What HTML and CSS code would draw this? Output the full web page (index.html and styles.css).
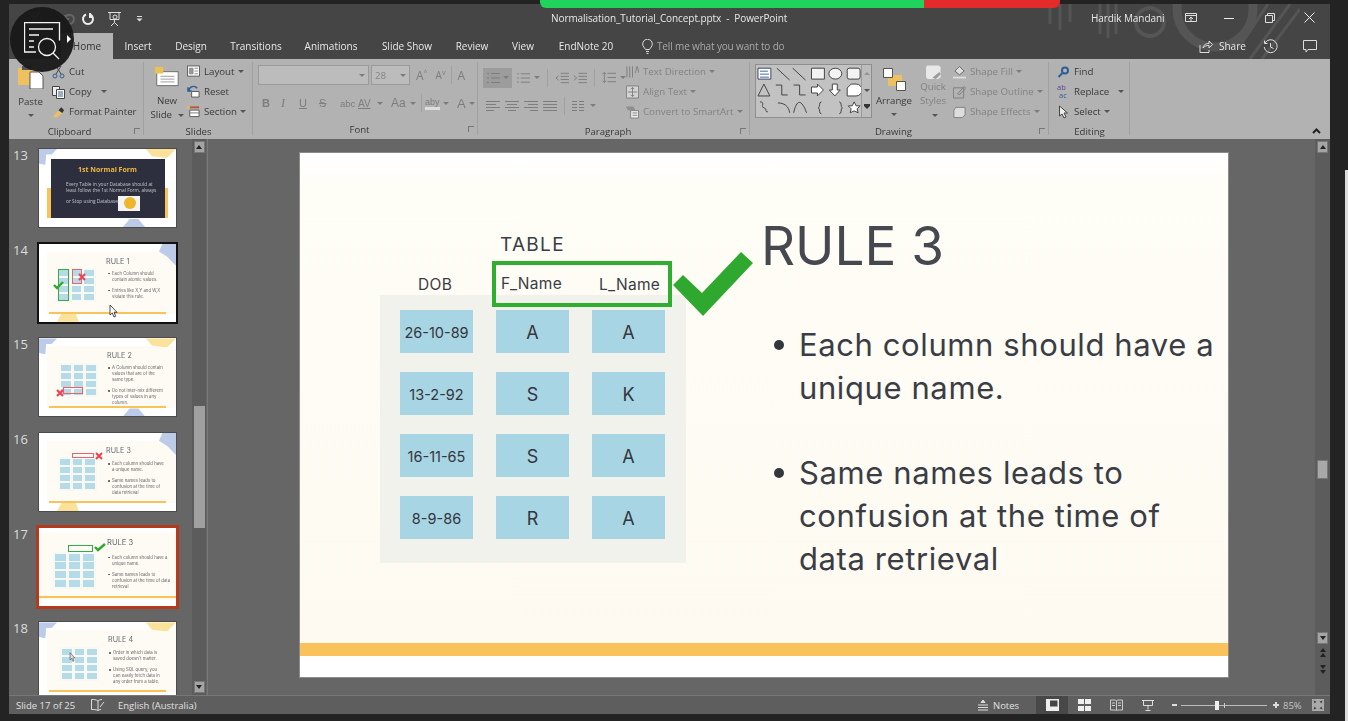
FILE: index.html
```html
<!DOCTYPE html>
<html lang="en">
<head>
    <meta charset="UTF-8">
    <meta name="viewport" content="width=device-width, initial-scale=1.0">
    <title>Normalisation_Tutorial_Concept.pptx - PowerPoint</title>
    <link rel="stylesheet" href="styles.css">
</head>
<body>
    <div class="screen">
        <div class="app">
            <!-- title bar -->
            <header class="titlebar">
                <svg class="title-art" width="300" height="55" viewBox="0 0 300 55" fill="none" stroke="#555">
                    <circle cx="150" cy="18" r="14" stroke-width="4"/>
                    <circle cx="215" cy="5" r="38" stroke-width="9"/>
                    <path d="M100 0v30M108 0v34M116 0v30M50 0v20M60 0v26M70 0v18M250 55l40-55M262 55l38-50M238 45l30-45" stroke-width="3"/>
                </svg>
                <div class="title-row">
                    <div class="qat">
                        <svg class="qat-save" width="16" height="16" viewBox="0 0 16 16" fill="none" stroke="#777"><path d="M2 2h10l2 2v10H2zM5 2v4h6V2M5 14V9h6v5"/></svg>
                        <svg class="qat-undo" width="14" height="14" viewBox="0 0 14 14" fill="none" stroke="#666" stroke-width="2"><path d="M3 7a4.500 4.500 0 1 1 2 4M3 3v4h4"/></svg>
                        <svg class="qat-redo" width="14" height="14" viewBox="0 0 14 14" fill="none" stroke="#eee" stroke-width="2"><path d="M9 2.500a5 5 0 1 1-4 0M9 1v4h3"/></svg>
                        <svg class="qat-show" width="15" height="16" viewBox="0 0 15 16" fill="none" stroke="#ddd"><path d="M1 1.500h13M3 1.500v7h9v-7M7.500 8.500v3M4 15l3.500-3.500L11 15"/><circle cx="8" cy="6" r="2"/></svg>
                        <svg class="qat-more" width="7" height="7" viewBox="0 0 7 7" fill="#ddd"><path d="M1 1h5v1H1zM0.500 3.500h6L3.500 6.500z"/></svg>
                    </div>
                    <div class="doc-title">Normalisation_Tutorial_Concept.pptx &nbsp;-&nbsp; PowerPoint</div>
                    <div class="user">Hardik Mandani</div>
                    <div class="win-buttons">
                        <svg width="12" height="10" viewBox="0 0 12 10" fill="none" stroke="#ddd"><path d="M.5.500h11v8H.500zM.5 2.500h11"/><path d="M6 8V4M4 6l2-2 2 2" /></svg>
                        <svg width="10" height="10" viewBox="0 0 10 10" stroke="#eee"><path d="M0 5.500h10"/></svg>
                        <svg width="10" height="10" viewBox="0 0 10 10" fill="none" stroke="#ddd"><path d="M.5 2.500h7v7h-7zM2.500 2.500v-2h7v7h-2"/></svg>
                        <svg width="11" height="11" viewBox="0 0 11 11" stroke="#eee"><path d="M.5.500l10 10M10.500.500l-10 10"/></svg>
                    </div>
                </div>
                <nav class="tab-row">
                    <span class="tab tab-file">File</span>
                    <span class="tab tab-home">Home</span>
                    <span class="tab tab-insert">Insert</span>
                    <span class="tab tab-design">Design</span>
                    <span class="tab tab-trans">Transitions</span>
                    <span class="tab tab-anim">Animations</span>
                    <span class="tab tab-show">Slide Show</span>
                    <span class="tab tab-review">Review</span>
                    <span class="tab tab-view">View</span>
                    <span class="tab tab-endnote">EndNote 20</span>
                    <span class="tell">
                        <svg width="11" height="15" viewBox="0 0 11 15" fill="none" stroke="#ddd"><path d="M3.500 10.500C2.500 8.500.7 7.500.7 5a4.800 4.800 0 0 1 9.600 0c0 2.500-1.800 3.500-2.800 5.500zM4 12.500h3M4.500 14.500h2"/></svg>
                        Tell me what you want to do
                    </span>
                    <span class="share">
                        <svg width="14" height="13" viewBox="0 0 14 13" fill="none" stroke="#ddd"><path d="M1 5v7.500h9V10M4 8c0-3 3-4.500 6-4.500V1l3.500 3.500L10 8V5.500C7.500 5.500 5.500 6 4 8z"/></svg>
                        Share
                    </span>
                    <svg class="tab-history" width="15" height="15" viewBox="0 0 15 15" fill="none" stroke="#ddd"><path d="M2 4a6.500 6.500 0 1 1-.8 4M1.500 1.500V4.500h3M7.500 4v4l3 1.500"/></svg>
                    <svg class="tab-comment" width="14" height="13" viewBox="0 0 14 13" fill="none" stroke="#ddd"><path d="M.5.500h13v9H5l-2 2.500V9.500H.5z"/></svg>
                </nav>
            </header>

            <!-- ribbon -->
            <section class="ribbon">
                <div class="group g-clip">
                    <div class="group-body">
                        <div class="big-btn paste-btn">
                            <svg width="26" height="25" viewBox="0 0 26 25"><path d="M0 4h18v17H0z" fill="#eec05f"/><path d="M4 2h9v4H4z" fill="#555"/><path d="M12 8h9l4 4v13H12z" fill="#fff" stroke="#555"/></svg>
                            <span class="big-label">Paste</span>
                            <i class="caret"></i>
                        </div>
                        <div class="rows">
                            <div class="row"><svg class="ico" width="13" height="14" viewBox="0 0 13 14" fill="none" stroke="#3a5d8a"><circle cx="3" cy="11" r="2"/><circle cx="10" cy="11" r="2"/><path d="M4 9l5-8M9 9L4 1" stroke="#444"/></svg>Cut</div>
                            <div class="row"><svg class="ico" width="13" height="14" viewBox="0 0 13 14" fill="#eee" stroke="#444"><path d="M.5 1.500h7v9h-7z"/><path d="M4.500 4.500h8v9h-8z" fill="#fff"/><path d="M6 7h5M6 9h5M6 11h5" stroke="#3a5d8a"/></svg>Copy <i class="caret caret-copy"></i></div>
                            <div class="row"><svg class="ico" width="14" height="14" viewBox="0 0 14 14"><path d="M1 12l6-7 4 3-6 5z" fill="#eec05f"/><path d="M7 5l3-3 3 3-2 3z" fill="#333"/></svg>Format Painter</div>
                        </div>
                    </div>
                    <div class="group-label">Clipboard<i class="launcher"></i></div>
                </div>

                <div class="group g-slides">
                    <div class="group-body">
                        <div class="big-btn new-btn">
                            <svg width="26" height="22" viewBox="0 0 26 22"><path d="M2 5h23v15H2z" fill="#fff" stroke="#666"/><path d="M6 10h15M6 13h15M6 16h15" stroke="#999"/><path d="M0 0h9v7H0z" fill="#e8c255"/></svg>
                            <span class="big-label">New<br>Slide <i class="caret caret-in"></i></span>
                        </div>
                        <div class="rows">
                            <div class="row"><svg class="ico" width="14" height="13" viewBox="0 0 14 13" fill="#fff" stroke="#555"><path d="M.5.500h13v11H.500z"/><path d="M2.500 3h4v6h-4zM8 3h4M8 6h4M8 9h4" fill="#999" stroke="#888"/></svg>Layout <i class="caret caret-in"></i></div>
                            <div class="row"><svg class="ico" width="14" height="13" viewBox="0 0 14 13" fill="none" stroke="#2d5f95" stroke-width="1.500"><path d="M2 6a5 5 0 0 1 9-3M1 2v4h4"/><path d="M5 6.500h8v6H5z" fill="#fff" stroke="#555" stroke-width="1"/></svg>Reset</div>
                            <div class="row"><svg class="ico" width="14" height="13" viewBox="0 0 14 13" fill="#fff" stroke="#555"><path d="M3 5h10v7H3z"/><path d="M0 1h4v2H0z" fill="#e8c255" stroke="none"/><path d="M3 2h10" stroke="#c0562f" stroke-width="2"/><path d="M3 8h10" stroke="#777"/></svg>Section <i class="caret caret-in"></i></div>
                        </div>
                    </div>
                    <div class="group-label">Slides</div>
                </div>

                <div class="group g-font">
                    <div class="group-body font-body">
                        <div class="tool-row">
                            <div class="font-box"><i class="caret"></i></div>
                            <div class="size-box"><span>28</span><i class="caret"></i></div>
                            <span class="tool grow-a">A<sup>^</sup></span>
                            <span class="tool shrink-a">A<sup>v</sup></span>
                            <i class="vsep sep-font-1"></i>
                            <span class="tool erase-a">A</span>
                        </div>
                        <div class="tool-row fmt-row">
                            <b>B</b><em>I</em><u>U</u><s>S</s><span class="abc">abc</span><span class="av">AV</span><i class="caret"></i><span class="aa">Aa</span><i class="caret"></i><i class="vsep"></i><span class="aby">aby</span><i class="caret"></i><span class="font-a">A</span><i class="caret"></i>
                        </div>
                    </div>
                    <div class="group-label">Font<i class="launcher"></i></div>
                </div>

                <div class="group g-para">
                    <div class="group-body para-body">
                        <div class="para-tools">
                            <div class="tool-row">
                                <span class="list-on"><svg width="16" height="12" viewBox="0 0 16 12" stroke="#7d7d7d"><path d="M0 1.500h2M4 1.500h9M0 6h2M4 6h9M0 10.500h2M4 10.500h9"/></svg><i class="caret"></i></span>
                                <svg class="num-list" width="14" height="12" viewBox="0 0 14 12" stroke="#7d7d7d"><path d="M0 1.500h2M4 1.500h10M0 6h2M4 6h10M0 10.500h2M4 10.500h10"/></svg><i class="caret"></i>
                                <i class="vsep"></i>
                                <svg width="15" height="12" viewBox="0 0 15 12" fill="none" stroke="#7d7d7d"><path d="M6 1h9M6 4.300h9M6 7.600h9M6 11h9M4 3.500L1 6l3 2.500"/></svg>
                                <svg width="15" height="12" viewBox="0 0 15 12" fill="none" stroke="#7d7d7d"><path d="M6 1h9M6 4.300h9M6 7.600h9M6 11h9M1 3.500L4 6 1 8.500"/></svg>
                                <i class="vsep"></i>
                                <svg width="15" height="13" viewBox="0 0 15 13" fill="none" stroke="#7d7d7d"><path d="M6 2h9M6 6.500h9M6 11h9M2.500 1v11M.5 3l2-2 2 2M.5 10l2 2 2-2"/></svg><i class="caret"></i>
                            </div>
                            <div class="tool-row align-row">
                                <svg width="14" height="10" viewBox="0 0 14 10" stroke="#7d7d7d"><path d="M0 .500h14M0 3.500h10M0 6.500h14M0 9.500h8"/></svg>
                                <svg width="14" height="10" viewBox="0 0 14 10" stroke="#7d7d7d"><path d="M0 .500h14M2 3.500h10M0 6.500h14M3 9.500h8"/></svg>
                                <svg width="14" height="10" viewBox="0 0 14 10" stroke="#7d7d7d"><path d="M0 .500h14M4 3.500h10M0 6.500h14M6 9.500h8"/></svg>
                                <svg width="14" height="10" viewBox="0 0 14 10" stroke="#7d7d7d"><path d="M0 .500h14M0 3.500h14M0 6.500h14M0 9.500h14"/></svg>
                                <i class="vsep"></i>
                                <svg width="13" height="10" viewBox="0 0 13 10" stroke="#7d7d7d"><path d="M0 .500h5M7 .500h5M0 3.500h5M7 3.500h5M0 6.500h5M7 6.500h5M0 9.500h5M7 9.500h5"/></svg><i class="caret"></i>
                            </div>
                        </div>
                        <div class="rows rows-off">
                            <div class="row"><svg class="ico" width="14" height="14" viewBox="0 0 14 14" fill="none" stroke="#7d7d7d"><path d="M1 1v12M4 1v12M7 1v12M10 8l2-7 2 7"/></svg>Text Direction <i class="caret caret-in"></i></div>
                            <div class="row"><svg class="ico" width="14" height="14" viewBox="0 0 14 14" fill="#d5d5d5" stroke="#7d7d7d"><path d="M.5.500h13v13H.500z"/><path d="M7 2v10M5 4l2-2 2 2M5 10l2 2 2-2M2 7h10" fill="none"/></svg>Align Text <i class="caret caret-in"></i></div>
                            <div class="row"><svg class="ico" width="14" height="14" viewBox="0 0 14 14" fill="#eee" stroke="#7d7d7d"><path d="M0 1h8l2 4H2z" fill="#8e8e8e" stroke="none"/><path d="M5 5.500h8.500v8H5z"/><path d="M7 8h5M7 10.500h5"/></svg>Convert to SmartArt <i class="caret caret-in"></i></div>
                        </div>
                    </div>
                    <div class="group-label">Paragraph<i class="launcher"></i></div>
                </div>

                <div class="group g-draw">
                    <div class="group-body draw-body">
                        <div class="gallery">
                            <svg width="106" height="52" viewBox="0 0 106 52" fill="none" stroke="#444">
                                <path d="M2 3h13v11H2z" fill="#fff" stroke="#446"/><path d="M4 6h8M4 9h9M4 12h9" stroke="#3a6ea8"/>
                                <path d="M21 3l13 12M37 3l13 12"/><path d="M56 3h13v11H56zM92 5a2 2 0 0 1 2-2h9a2 2 0 0 1 2 2v7a2 2 0 0 1-2 2h-9a2 2 0 0 1-2-2z" fill="#f3f3f3"/><ellipse cx="80" cy="8.500" rx="6.500" ry="5.500" fill="#f3f3f3"/>
                                <path d="M8 19l6 12H2zM20 20h6v10h6M38 20h6v10h6" fill="none"/><path d="M56 22h6v-3l6 6-6 6v-3h-6z" fill="#fff"/><path d="M77 19h5v6h3l-5.500 6L74 25h3z" fill="#fff"/><path d="M92 31v-8l4-4h5a4 4 0 0 1 0 12z" fill="#fff"/>
                                <path d="M4 37c6 0 0 5 4 6s0 4 4 4M22 38c6 0 11 3 12 10M38 48c3-14 8-14 13 0M66 37c-3 0-1 5-3 6 2 1 0 6 3 6M84 37c3 0 1 5 3 6-2 1 0 6-3 6"/><path d="M99 37l2 4h4l-3 3 1 4-4-2-4 2 1-4-3-3h4z" fill="#fff"/>
                            </svg>
                            <div class="gallery-scroll"><i class="caret gs-up"></i><i class="caret"></i><i class="caret gs-more"></i></div>
                        </div>
                        <div class="big-btn arrange-btn">
                            <svg width="23" height="23" viewBox="0 0 23 23"><path d="M5 7h14v11H5z" fill="#eec05f"/><path d="M.5.500h9v9h-9zM13.500 13.500h9v9h-9z" fill="#fff" stroke="#555"/></svg>
                            <span class="big-label">Arrange</span>
                            <i class="caret"></i>
                        </div>
                        <div class="big-btn quick-btn">
                            <svg width="26" height="25" viewBox="0 0 26 25"><path d="M3 1h20l3 3v17l-6 4H4l-3-4V4z" fill="#e8e8e8"/><path d="M12 22l12-10 2 4-8 8z" fill="#999"/></svg>
                            <span class="big-label">Quick<br>Styles <i class="caret caret-in"></i></span>
                        </div>
                        <div class="rows rows-off">
                            <div class="row"><svg class="ico" width="14" height="14" viewBox="0 0 14 14"><path d="M7 1l5 5-5 4-5-4z" fill="#ddd" stroke="#666"/><path d="M0 12h14v2H0z" fill="#ddd"/></svg>Shape Fill <i class="caret caret-in"></i></div>
                            <div class="row"><svg class="ico" width="14" height="14" viewBox="0 0 14 14" fill="none" stroke="#7d7d7d"><path d="M.5 2.500h11v11H.500zM5 9l7-8 2 2-7 7z"/></svg>Shape Outline <i class="caret caret-in"></i></div>
                            <div class="row"><svg class="ico" width="14" height="14" viewBox="0 0 14 14"><path d="M3 2h10v8l-3 3H1V5z" fill="#ddd" stroke="#7d7d7d"/></svg>Shape Effects <i class="caret caret-in"></i></div>
                        </div>
                    </div>
                    <div class="group-label">Drawing<i class="launcher"></i></div>
                </div>

                <div class="group g-edit">
                    <div class="group-body">
                        <div class="rows">
                            <div class="row"><svg class="ico" width="12" height="12" viewBox="0 0 12 12" fill="none" stroke="#2d5f95" stroke-width="2"><circle cx="7.500" cy="4.500" r="3"/><path d="M5 7l-4 4"/></svg>Find</div>
                            <div class="row"><span class="ab ico"><span class="ab-top">ab</span><span class="ab-low">ac</span></span>Replace <i class="caret caret-replace"></i></div>
                            <div class="row"><svg class="ico" width="10" height="14" viewBox="0 0 10 14" fill="#eee" stroke="#444"><path d="M1 1v10l2.500-2L5.500 13l2-1-2-4H9z"/></svg>Select <i class="caret caret-in"></i></div>
                        </div>
                    </div>
                    <div class="group-label">Editing</div>
                </div>
                <svg class="collapse" width="9" height="6" viewBox="0 0 9 6" fill="none" stroke="#222" stroke-width="2"><path d="M1 5l3.500-3.500L8 5"/></svg>
            </section>

            <!-- slides and stage -->
            <main class="workspace">
                <aside class="sidebar">
                    <div class="thumb-row">
                        <span class="thumb-num">13</span>
                        <div class="thumb">
                            <i class="blob blue tl"></i><i class="blob yellow tr"></i><i class="blob blue bc"></i>
                            <i class="dark-band"></i>
                            <div class="dark-card">
                                <h4>1st Normal Form</h4>
                                <p>Every Table in your Database should at<br>least follow the 1st Normal Form, always</p>
                                <p class="dark-last">or Stop using Database</p>
                                <span class="dark-pic"><i></i></span>
                            </div>
                        </div>
                    </div>
                    <div class="thumb-row">
                        <span class="thumb-num">14</span>
                        <div class="thumb thumb-black">
                            <i class="cream"></i><i class="blob blue tr-small"></i><i class="blob yellow bl"></i>
                            <div class="mini-grid g14"><i></i><i></i><i></i><i></i><i></i><i></i><i></i><i></i><i></i><i></i><i></i><i></i></div>
                            <i class="mark green-box b14a"></i><i class="mark red-box b14b"></i>
                            <svg class="mark x14" width="8" height="8" viewBox="0 0 8 8" stroke="#f04050" stroke-width="2"><path d="M1 1l6 6M7 1L1 7"/></svg>
                            <svg class="mark c14" width="11" height="9" viewBox="0 0 11 9" fill="none" stroke="#2fa82f" stroke-width="2.400"><path d="M1 4l3 3 6-6"/></svg>
                            <h5 class="mini-rule r14">RULE 1</h5>
                            <ul class="mini-list l14"><li>Each Column should contain atomic values.</li><li>Entries like X,Y and W,X violate this rule.</li></ul>
                            <i class="mini-line"></i>
                            <svg class="cursor c-a" width="9" height="14" viewBox="0 0 9 14" fill="#fff" stroke="#222" stroke-width=".8"><path d="M1 1v10l2.300-2 1.700 4 1.700-.7-1.700-4H8z"/></svg>
                        </div>
                    </div>
                    <div class="thumb-row">
                        <span class="thumb-num">15</span>
                        <div class="thumb">
                            <i class="cream"></i><i class="blob blue tl"></i><i class="blob yellow tr"></i><i class="blob blue bc"></i>
                            <div class="mini-grid g15"><i></i><i></i><i></i><i></i><i></i><i></i><i></i><i></i><i></i><i></i><i></i><i></i></div>
                            <i class="mark red-box b15"></i>
                            <svg class="mark x15" width="8" height="8" viewBox="0 0 8 8" stroke="#f04050" stroke-width="2"><path d="M1 1l6 6M7 1L1 7"/></svg>
                            <h5 class="mini-rule r15">RULE 2</h5>
                            <ul class="mini-list l15"><li>A Column should contain values that are of the same type.</li><li>Do not inter-mix different types of values in any column.</li></ul>
                            <i class="mini-line"></i>
                        </div>
                    </div>
                    <div class="thumb-row">
                        <span class="thumb-num">16</span>
                        <div class="thumb">
                            <i class="cream"></i><i class="blob blue tr-small"></i><i class="blob yellow bl"></i>
                            <div class="mini-grid g16"><i></i><i></i><i></i><i></i><i></i><i></i><i></i><i></i><i></i><i></i><i></i><i></i></div>
                            <i class="mark red-box b16"></i>
                            <svg class="mark x16" width="8" height="8" viewBox="0 0 8 8" stroke="#f04050" stroke-width="2"><path d="M1 1l6 6M7 1L1 7"/></svg>
                            <h5 class="mini-rule r16">RULE 3</h5>
                            <ul class="mini-list l16"><li>Each column should have a unique name.</li><li>Same names leads to confusion at the time of data retrieval</li></ul>
                            <i class="mini-line"></i>
                        </div>
                    </div>
                    <div class="thumb-row">
                        <span class="thumb-num">17</span>
                        <div class="thumb thumb-active">
                            <i class="cream"></i>
                            <div class="mini-grid g17"><i></i><i></i><i></i><i></i><i></i><i></i><i></i><i></i><i></i><i></i><i></i><i></i></div>
                            <i class="mark green-box b17"></i>
                            <svg class="mark c17" width="12" height="9" viewBox="0 0 12 9" fill="none" stroke="#2fa82f" stroke-width="2.400"><path d="M1 4l3 3 7-6"/></svg>
                            <h5 class="mini-rule r17">RULE 3</h5>
                            <ul class="mini-list l17"><li>Each column should have a unique name.</li><li>Same names leads to confusion at the time of data retrieval</li></ul>
                            <i class="mini-line line-17"></i>
                        </div>
                    </div>
                    <div class="thumb-row">
                        <span class="thumb-num">18</span>
                        <div class="thumb">
                            <i class="cream"></i><i class="blob blue tl"></i><i class="blob yellow tr"></i>
                            <div class="mini-grid g18"><i></i><i></i><i></i><i></i><i></i><i></i><i></i><i></i><i></i><i></i><i></i><i></i></div>
                            <svg class="cursor c-b" width="7" height="10" viewBox="0 0 9 14" fill="#ddd" stroke="#444" stroke-width=".8"><path d="M1 1v10l2.300-2 1.700 4 1.700-.7-1.700-4H8z"/></svg>
                            <h5 class="mini-rule r18">RULE 4</h5>
                            <ul class="mini-list l18"><li>Order in which data is saved doesn't matter.</li><li>Using SQL query, you can easily fetch data in any order from a table.</li></ul>
                            <i class="mini-line"></i>
                        </div>
                    </div>
                </aside>
                <div class="scrollbar side-scroll">
                    <span class="sb-btn"><i class="tri-up"></i></span>
                    <span class="sb-thumb side-thumb"></span>
                    <span class="sb-btn"><i class="tri-down"></i></span>
                </div>

                <div class="stage">
                    <article class="slide">
                        <i class="slide-cream"></i>
                        <i class="slide-band"></i>
                        <div class="tbl-panel"></div>
                        <div class="tbl-title">TABLE</div>
                        <div class="tbl-head head-dob">DOB</div>
                        <div class="tbl-head head-f">F_Name</div>
                        <div class="tbl-head head-l">L_Name</div>
                        <div class="head-box"></div>
                        <svg class="big-check" width="80" height="64" viewBox="0 0 80 64"><path d="M0 33l10-10 19 18L68 0l12 11-50 53z" fill="#2fa82f"/></svg>
                        <div class="tbl-grid">
                            <div class="cell">26-10-89</div><div class="cell cell-letter">A</div><div class="cell cell-letter">A</div>
                            <div class="cell">13-2-92</div><div class="cell cell-letter">S</div><div class="cell cell-letter">K</div>
                            <div class="cell">16-11-65</div><div class="cell cell-letter">S</div><div class="cell cell-letter">A</div>
                            <div class="cell">8-9-86</div><div class="cell cell-letter">R</div><div class="cell cell-letter">A</div>
                        </div>
                        <h1 class="rule-title">RULE 3</h1>
                        <ul class="rule-points">
                            <li>Each column should have a unique name.</li>
                            <li>Same names leads to confusion at the time of data retrieval</li>
                        </ul>
                    </article>
                </div>
                <div class="scrollbar main-scroll">
                    <span class="sb-btn"><i class="tri-up"></i></span>
                    <span class="sb-thumb main-thumb"></span>
                    <span class="sb-btn sb-down"><i class="tri-down"></i></span>
                    <span class="page-arrows"><i class="tri-up"></i><i class="tri-up"></i></span>
                    <span class="page-arrows"><i class="tri-down"></i><i class="tri-down"></i></span>
                </div>
            </main>

            <!-- status bar -->
            <footer class="statusbar">
                <span class="st-slide">Slide 17 of 25</span>
                <svg class="st-book" width="14" height="12" viewBox="0 0 14 12" fill="none" stroke="#ddd"><path d="M7 2C5 .5 3 .5 .5.500v10c2.500 0 4.500 0 6.500 1 1-.6 2-1 3-1M7 2v9.500M7 2c1-1 2.500-1.500 4-1.500M9 8l4-5"/></svg>
                <span class="st-lang">English (Australia)</span>
                <span class="st-notes"><svg width="10" height="11" viewBox="0 0 10 11" stroke="#ddd" fill="#ddd"><path d="M5 0l2 2.500H3zM0 5h10M0 7.500h10M0 10h10" /></svg>Notes</span>
                <span class="st-view st-view-on"><svg width="13" height="12" viewBox="0 0 13 12"><path d="M0 0h13v12H0z" fill="#eee"/><path d="M4 1.500h7.500v6H4z" fill="#444"/></svg></span>
                <span class="st-view"><svg width="13" height="12" viewBox="0 0 13 12" fill="#eee"><path d="M0 0h6v5H0zM7 0h6v5H7zM0 7h6v5H0zM7 7h6v5H7z"/></svg></span>
                <span class="st-view"><svg width="13" height="12" viewBox="0 0 13 12" fill="none" stroke="#ccc"><path d="M.5 1h5L6.500 2l1-1h5v10h-5l-1 1-1-1h-5zM6.500 2v9M2 4h3M2 6.500h3M8 4h3M8 6.500h3"/></svg></span>
                <span class="st-view"><svg width="12" height="12" viewBox="0 0 12 12" fill="none" stroke="#ddd"><path d="M0 1.500h12M1.500 1.500v5h9v-5M6 6.500v4M3.500 11.500h5"/></svg></span>
                <span class="zoom-ctl">
                    <i class="zoom-minus"></i>
                    <span class="zoom-track"><i class="zoom-knob"></i><i class="zoom-tick"></i></span>
                    <i class="zoom-plus"></i>
                </span>
                <span class="st-pct">85%</span>
                <svg class="st-fit" width="12" height="12" viewBox="0 0 12 12" fill="#aaa"><path d="M0 0h12v12H0z"/><path d="M1.500 1.500l3 1-2 2zM10.500 1.500l-1 3-2-2zM1.500 10.500l1-3 2 2zM10.500 10.500l-3-1 2-2z" fill="#444"/></svg>
            </footer>
        </div>

        <!-- overlays from the screen recorder and the call -->
        <div class="call-pill"><span class="pill-green"></span><span class="pill-red"></span></div>
        <div class="rec-badge">
            <svg width="38" height="38" viewBox="0 0 38 38" fill="none" stroke="#f4f4f4" stroke-width="1.300">
                <path d="M12 30H.5V.5h35v18"/>
                <path d="M5 7h24M5 13h10M5 19h5M5 25h5"/>
                <circle cx="23" cy="25" r="8.500"/>
                <path d="M29 31l6 6"/>
            </svg>
            <i class="rec-arrow"></i>
        </div>
        <i class="edge-strip"></i>
    </div>
</body>
</html>
```

FILE: styles.css
```css
* {
    box-sizing: border-box;
}
body {
    margin: 0;
    background-color: #232323;
    font-family: "Open Sans", "Liberation Sans", sans-serif;
    overflow: hidden;
}
i {
    font-style: normal;
}
.screen {
    position: relative;
    width: 1348px;
    height: 721px;
    padding: 4px 18px 7px 9px;
    overflow: hidden;
}
.app {
    height: 710px;
    display: flex;
    flex-direction: column;
    filter: blur(0.45px);
}

/* title bar */
.titlebar {
    position: relative;
    height: 55px;
    flex: none;
    background-color: #454545;
    color: #e8e8e8;
}
.title-art {
    position: absolute;
    right: 30px;
    top: 0;
}
.title-row {
    position: relative;
    height: 29px;
    display: flex;
    align-items: center;
    font-size: 10px;
    letter-spacing: -0.08px;
    padding-bottom: 2px;
}
.qat {
    width: 542px;
    display: flex;
    align-items: center;
    padding-left: 18px;
    padding-top: 2px;
    flex: none;
}
.qat-undo {
    margin-left: 19px;
}
.qat-redo {
    margin-left: 5px;
}
.qat-show {
    margin-left: 12px;
}
.qat-more {
    margin-left: 14px;
}
.doc-title {
    width: 280px;
    flex: none;
}
.user {
    margin-left: 260px;
    width: 94px;
}
.win-buttons {
    display: flex;
    align-items: center;
    gap: 29px;
}
.win-buttons svg:nth-child(2) {
    margin-left: -2px;
}
.win-buttons svg:nth-child(3) {
    margin-left: 2px;
}
.tab-row {
    position: relative;
    height: 26px;
    display: flex;
    align-items: center;
    font-size: 10px;
}
.tab {
    text-align: center;
    flex: none;
}
.tab-file {
    width: 52px;
    padding-right: 8px;
    color: #777;
}
.tab-home {
    width: 52px;
    height: 26px;
    line-height: 26px;
    background-color: #b2b2b2;
    color: #333;
}
.tab-insert {
    width: 50px;
}
.tab-design {
    width: 56px;
}
.tab-trans {
    width: 74px;
}
.tab-anim {
    width: 76px;
}
.tab-show {
    width: 76px;
}
.tab-review {
    width: 54px;
}
.tab-view {
    width: 48px;
}
.tab-endnote {
    width: 78px;
}
.tell {
    width: 574px;
    padding-left: 17px;
    color: #a8a8a8;
    display: flex;
    align-items: center;
    gap: 4px;
    flex: none;
    letter-spacing: -0.15px;
}
.tell svg {
    flex: none;
}
.share {
    display: flex;
    align-items: center;
    gap: 6px;
    width: 54px;
    flex: none;
}
.tab-history {
    margin-left: 10px;
}
.tab-comment {
    margin-left: 25px;
}

/* ribbon */
.ribbon {
    position: relative;
    height: 80px;
    flex: none;
    display: flex;
    background-color: #b2b2b2;
    color: #3a3a3a;
    font-size: 9.7px;
}
.group {
    position: relative;
    display: flex;
    flex-direction: column;
    flex: none;
}
.group::after {
    content: "";
    position: absolute;
    right: 0;
    top: 3px;
    bottom: 4px;
    width: 1px;
    background-color: #a0a0a0;
}
.group-body {
    height: 63px;
    display: flex;
    padding-top: 2.500px;
}
.group-label {
    position: relative;
    text-align: center;
    line-height: 19px;
    font-size: 9.6px;
    color: #383838;
    padding-right: 12px;
}
.g-clip .group-label {
    padding-right: 14px;
}
.g-slides .group-label,
.g-edit .group-label {
    padding-right: 0;
}
.launcher {
    position: absolute;
    right: 4px;
    top: 6px;
    width: 6px;
    height: 6px;
    border-left: 1px solid #777;
    border-top: 1px solid #777;
}
.g-clip {
    width: 135px;
}
.g-slides {
    width: 109px;
}
.g-font {
    width: 225px;
}
.g-para {
    width: 272px;
}
.g-draw {
    width: 299px;
}
.g-edit {
    width: 81px;
}
.big-btn {
    display: flex;
    flex-direction: column;
    align-items: center;
    flex: none;
    padding-top: 5px;
    line-height: 14px;
}
.big-label {
    text-align: center;
    margin-top: 3px;
}
.paste-btn {
    width: 43px;
    margin-top: -3px;
}
.paste-btn .big-label {
    margin-top: 6px;
}
.paste-btn .caret {
    margin-top: 5px;
}
.new-btn {
    width: 40px;
    margin-left: 3px;
    padding-top: 5px;
}
.new-btn .big-label {
    margin-top: 7px;
}
.rows {
    display: flex;
    flex-direction: column;
}
.row {
    height: 20px;
    display: flex;
    align-items: center;
    white-space: nowrap;
}
.ico {
    flex: none;
    width: 13px;
    margin-right: 4px;
}
.rows-off {
    color: #838383;
}
.caret {
    display: inline-block;
    width: 0;
    height: 0;
    border-left: 3px solid transparent;
    border-right: 3px solid transparent;
    border-top: 3px solid #555;
    flex: none;
}
.caret-in {
    margin-left: 3px;
    vertical-align: middle;
}
.caret-copy {
    margin-left: 9px;
}
.caret-replace {
    margin-left: 9px;
}
.rows-off .caret,
.font-body .caret,
.para-tools .caret {
    border-top-color: #7d7d7d;
}
.font-body {
    flex-direction: column;
    padding: 6px 0 0 5px;
    gap: 6px;
}
.tool-row {
    height: 20px;
    display: flex;
    align-items: center;
    color: #7d7d7d;
}
.font-body .fmt-row {
    margin-top: 2px;
}
.font-box {
    width: 111px;
    height: 20px;
    background-color: #bcbcbc;
    border: 1px solid #9a9a9a;
    display: flex;
    align-items: center;
    justify-content: flex-end;
    padding-right: 3px;
}
.size-box {
    width: 39px;
    height: 20px;
    margin-left: 2px;
    background-color: #bcbcbc;
    border: 1px solid #9a9a9a;
    display: flex;
    align-items: center;
    justify-content: space-between;
    padding: 0 3px;
    color: #858585;
}
.tool {
    font-size: 12px;
}
.tool sup {
    font-size: 7px;
}
.grow-a {
    margin-left: 6px;
}
.shrink-a {
    margin-left: 8px;
    font-size: 10px;
}
.sep-font-1 {
    margin: 0 5px 0 6px;
}
.vsep {
    width: 1px;
    height: 18px;
    background-color: #a0a0a0;
    flex: none;
}
.fmt-row {
    padding-left: 4px;
    font-size: 11px;
    font-family: "Liberation Sans", sans-serif;
}
.fmt-row b {
    width: 19px;
}
.fmt-row em {
    width: 18px;
    font-family: "Liberation Serif", serif;
    font-size: 12px;
}
.fmt-row u {
    width: 20px;
}
.fmt-row s {
    width: 21px;
}
.abc {
    width: 17px;
    font-size: 9.500px;
    margin-right: 1px;
}
.av {
    width: 14px;
    font-size: 10px;
    margin-right: 2px;
    text-decoration: underline;
}
.aa {
    width: 16px;
    margin-left: 8px;
    font-size: 12px;
}
.fmt-row .caret {
    margin-left: 3px;
}
.fmt-row .vsep {
    margin: 0 3px 0 5px;
}
.aby {
    width: 15px;
    font-size: 9px;
    border-bottom: 3px solid #ddd;
}
.font-a {
    font-size: 13px;
    margin-left: 8px;
}
.para-body {
    padding-left: 5px;
}
.para-tools {
    width: 143px;
    display: flex;
    flex-direction: column;
    padding-top: 6px;
    gap: 8px;
    flex: none;
}
.para-tools .tool-row {
    gap: 4px;
}
.list-on {
    width: 29px;
    height: 20px;
    background-color: #9c9c9c;
    display: flex;
    align-items: center;
    justify-content: space-between;
    padding: 0 3px 0 4px;
}
.num-list {
    margin-left: 1px;
}
.para-tools .vsep {
    margin: 0 3px;
}
.align-row {
    padding-left: 3px;
    gap: 5px !important;
}
.align-row .vsep {
    margin: 0 2px;
}
.draw-body {
    padding-left: 5px;
}
.gallery {
    width: 117px;
    height: 54px;
    margin-top: 2px;
    display: flex;
    justify-content: space-between;
    background-color: #c2c2c2;
    border: 1px solid #8e8e8e;
    flex: none;
}
.gallery-scroll {
    width: 10px;
    display: flex;
    flex-direction: column;
    justify-content: space-around;
    align-items: center;
    background-color: #bcbcbc;
    border-left: 1px solid #999;
}
.gs-up {
    transform: rotate(180deg);
    opacity: 0.4;
}
.gs-more {
    border-top-color: #333;
    box-shadow: 0 -2px 0 #333;
}
.arrange-btn {
    width: 40px;
    margin-left: 2px;
    padding-top: 6px;
    line-height: 14px;
}
.arrange-btn .big-label {
    margin-top: 3px;
}
.arrange-btn .caret {
    margin-top: 5px;
}
.quick-btn {
    width: 32px;
    padding-top: 3px;
    color: #838383;
    margin-left: 3px;
}
.quick-btn .big-label {
    margin-top: 1px;
}
.g-draw .rows {
    margin-left: 4px;
}
.g-edit .rows {
    margin-left: 8px;
}
.ab {
    display: flex;
    flex-direction: column;
    font-size: 7.500px;
    line-height: 7.500px;
    width: 13px;
}
.ab-top {
    color: #5a3f9a;
}
.ab-low {
    color: #2d5f95;
    padding-left: 2px;
}
.collapse {
    position: absolute;
    right: 9px;
    top: 69px;
}

/* workspace */
.workspace {
    height: 556px;
    flex: none;
    display: flex;
    background-color: #666;
}
.sidebar {
    width: 183px;
    flex: none;
    padding-top: 10px;
    display: flex;
    flex-direction: column;
    gap: 16.700px;
    overflow: hidden;
}
.thumb-row {
    display: flex;
    flex: none;
}
.thumb-num {
    width: 30px;
    flex: none;
    padding-left: 4px;
    font-size: 13px;
    line-height: 13px;
    color: #dcdcdc;
}
.thumb {
    position: relative;
    width: 137px;
    height: 78px;
    flex: none;
    background-color: #fff;
    overflow: hidden;
    outline: 1px solid #4c4c4c;
    filter: blur(0.35px);
}
.thumb-black {
    outline: 2px solid #111;
}
.thumb-active {
    outline: 3px solid #b5391d;
}
.thumb i,
.thumb svg,
.thumb h5,
.thumb ul,
.thumb .mini-grid,
.thumb .dark-card {
    position: absolute;
}
.cream {
    left: 8px;
    right: 0;
    top: 8px;
    bottom: 8px;
    background-color: #fefbf5;
}
.thumb-active .cream {
    left: 0;
    top: 4px;
    bottom: 6px;
}
.blob {
    display: block;
}
.blue {
    background-color: #bccbe8;
}
.yellow {
    background-color: #fbe29a;
}
.tl {
    left: 0;
    top: 0;
    width: 18px;
    height: 16px;
    clip-path: polygon(0 0, 100% 0, 70% 35%, 40% 35%, 35% 100%, 0 90%);
}
.tr {
    right: 0;
    top: 0;
    width: 30px;
    height: 9px;
    clip-path: polygon(0 0, 100% 0, 70% 100%, 20% 80%);
}
.tr-small {
    right: 0;
    top: 0;
    width: 17px;
    height: 22px;
    clip-path: polygon(20% 0, 100% 0, 100% 100%, 50% 60%, 0 35%);
}
.bl {
    left: 18px;
    bottom: 0;
    width: 22px;
    height: 8px;
    clip-path: polygon(20% 0, 85% 0, 100% 100%, 0 100%);
}
.bc {
    left: 84px;
    bottom: 0;
    width: 22px;
    height: 8px;
    clip-path: polygon(30% 0, 70% 0, 100% 100%, 0 100%);
}
.dark-band {
    left: 8px;
    right: 8px;
    top: 39px;
    height: 30px;
    background-color: #f9c25b;
}
.dark-card {
    left: 12px;
    top: 10px;
    width: 114px;
    height: 59px;
    background-color: #2d2f3e;
    color: #c4c4cc;
    font-size: 4.800px;
    line-height: 6px;
    padding: 7px 0 0 15px;
    white-space: nowrap;
}
.dark-card h4 {
    margin: 0 0 7px 12px;
    font-size: 7px;
    line-height: 8px;
    color: #f0b840;
}
.dark-card p {
    margin: 0;
}
.dark-last {
    margin-top: 5px !important;
}
.dark-pic {
    position: absolute;
    left: 67px;
    top: 37px;
    width: 22px;
    height: 15px;
    background-color: #f4f4f4;
}
.dark-pic i {
    left: 6px;
    top: 1px;
    width: 12px;
    height: 12px;
    border-radius: 50%;
    background-color: #efb52c;
}
.mini-grid {
    display: grid;
    grid-template-columns: repeat(3, 9.500px);
    grid-auto-rows: 6px;
    column-gap: 3px;
    row-gap: 2px;
    padding: 2px;
    background-color: #f9f9f4;
}
.mini-grid i {
    position: static !important;
    background-color: #b4dbe7;
}
.g14 {
    left: 18px;
    top: 24px;
}
.g15 {
    left: 20px;
    top: 25px;
}
.g16 {
    left: 19px;
    top: 24px;
}
.g17 {
    left: 14px;
    top: 24px;
    grid-template-columns: repeat(3, 10.500px);
    grid-auto-rows: 7px;
    column-gap: 3.500px;
    row-gap: 1.700px;
}
.g18 {
    left: 21px;
    top: 25px;
}
.green-box {
    border: 1px solid #35ab45;
}
.red-box {
    border: 1px solid #f0606a;
}
.b14a {
    left: 19px;
    top: 25px;
    width: 11px;
    height: 32px;
}
.b14b {
    left: 33px;
    top: 25px;
    width: 10px;
    height: 15px;
}
.x14 {
    left: 39px;
    top: 29px;
}
.c14 {
    left: 14px;
    top: 37px;
}
.b15 {
    left: 24px;
    top: 49px;
    width: 20px;
    height: 7px;
}
.x15 {
    left: 17px;
    top: 51px;
}
.b16 {
    left: 33px;
    top: 20px;
    width: 22px;
    height: 5px;
}
.x16 {
    left: 56px;
    top: 19px;
}
.b17 {
    left: 29px;
    top: 17px;
    width: 25px;
    height: 7px;
}
.c17 {
    left: 55px;
    top: 15px;
}
.mini-rule {
    margin: 0;
    font-family: "Inter", sans-serif;
    font-weight: 400;
    font-size: 7.200px;
    line-height: 8px;
    color: #666a70;
}
.mini-list {
    margin: 0;
    padding: 0;
    list-style: none;
    font-family: "Inter", sans-serif;
    font-size: 4.300px;
    line-height: 6px;
    color: #666;
    width: 56px;
}
.mini-list li {
    position: relative;
    margin-bottom: 5px;
    padding-left: 4px;
}
.mini-list li::before {
    content: "";
    position: absolute;
    left: 0;
    top: 2px;
    width: 1.500px;
    height: 1.500px;
    border-radius: 50%;
    background-color: #555;
}
.r14 {
    left: 67px;
    top: 14px;
}
.l14 {
    left: 69px;
    top: 27px;
}
.r15 {
    left: 68px;
    top: 14px;
}
.l15 {
    left: 69px;
    top: 27px;
}
.r16 {
    left: 67px;
    top: 14px;
}
.l16 {
    left: 69px;
    top: 28px;
}
.r17 {
    left: 68px;
    top: 11px;
    font-size: 7.600px;
}
.l17 {
    left: 69px;
    top: 27px;
    width: 66px;
}
.r18 {
    left: 69px;
    top: 14px;
}
.l18 {
    left: 70px;
    top: 28px;
}
.mini-line {
    left: 10px;
    right: 10px;
    top: 68px;
    height: 2px;
    background-color: #f9c25b;
}
.line-17 {
    left: 0;
    right: 0;
}
.c-a {
    left: 70px;
    top: 60px;
}
.c-b {
    left: 30px;
    top: 30px;
}

/* scrollbars */
.scrollbar {
    position: relative;
    width: 15px;
    flex: none;
    background-color: #5c5c5c;
    display: flex;
    flex-direction: column;
    align-items: center;
}
.side-scroll {
    width: 14px;
    justify-content: space-between;
    padding: 2px 0;
}
.sb-btn {
    width: 11px;
    height: 12px;
    flex: none;
    background-color: #a4a4a4;
    border: 1px solid #777;
    display: flex;
    align-items: center;
    justify-content: center;
}
.tri-up,
.tri-down {
    width: 0;
    height: 0;
    border-left: 3px solid transparent;
    border-right: 3px solid transparent;
}
.tri-up {
    border-bottom: 4px solid #222;
}
.tri-down {
    border-top: 4px solid #222;
}
.sb-thumb {
    width: 11px;
    background-color: #a2a2a2;
    flex: none;
}
.side-thumb {
    position: absolute;
    top: 267px;
    height: 122px;
    background-color: #a0a0a0;
}
.main-scroll {
    padding-top: 2px;
}
.main-thumb {
    position: absolute;
    top: 321px;
    height: 19px;
    background-color: #a8a8a8;
    border: 1px solid #777;
}
.sb-down {
    margin-top: 479px;
}
.page-arrows {
    margin-top: 4px;
    height: 13px;
    display: flex;
    flex-direction: column;
    align-items: center;
    gap: 1px;
}
.stage {
    flex: 1;
    padding: 14px 0 0 92px;
    border-left: 1px solid #7a7a7a;
    margin-left: 1px;
}

/* main slide */
.slide {
    position: relative;
    width: 928px;
    height: 524px;
    background-color: #fff;
    box-shadow: 0 0 0 1px #8a8a8a;
    color: #3a3d45;
    font-family: "Inter", "Liberation Sans", sans-serif;
}
.slide-cream {
    position: absolute;
    left: 0;
    right: 0;
    top: 0;
    height: 490px;
    background: linear-gradient(#fff 6px, #fefdf6 30px, #fefaf2);
}
.slide-band {
    position: absolute;
    left: 0;
    right: 0;
    top: 490px;
    height: 13px;
    background-color: #f9c25b;
}
.tbl-panel {
    position: absolute;
    left: 80px;
    top: 142px;
    width: 306px;
    height: 268px;
    background-color: #f1f2ec;
}
.tbl-title {
    position: absolute;
    left: 200px;
    top: 80px;
    font-size: 19px;
    line-height: 24px;
    letter-spacing: 1.300px;
}
.tbl-head {
    position: absolute;
    font-size: 15.500px;
    line-height: 20px;
    letter-spacing: 0.3px;
}
.head-dob {
    left: 118px;
    top: 122px;
}
.head-f {
    left: 201px;
    top: 121px;
}
.head-l {
    left: 299px;
    top: 122px;
}
.head-box {
    position: absolute;
    left: 192px;
    top: 108px;
    width: 180px;
    height: 46px;
    border: 4px solid #2fae2f;
}
.big-check {
    position: absolute;
    left: 373px;
    top: 99px;
}
.tbl-grid {
    position: absolute;
    left: 100px;
    top: 157px;
    display: grid;
    grid-template-columns: repeat(3, 73px);
    grid-auto-rows: 43px;
    column-gap: 23px;
    row-gap: 19px;
}
.cell {
    background-color: #a8d5e4;
    display: flex;
    align-items: center;
    justify-content: center;
    padding-top: 2px;
    font-size: 14.500px;
    color: #33363c;
}
.cell-letter {
    font-size: 18px;
}
.rule-title {
    position: absolute;
    left: 461px;
    top: 60px;
    margin: 0;
    font-size: 53px;
    line-height: 66px;
    font-weight: 400;
    color: #45484f;
}
.rule-points {
    position: absolute;
    left: 499px;
    top: 170px;
    width: 425px;
    margin: 0;
    padding: 0;
    list-style: none;
    font-size: 31px;
    letter-spacing: 0.6px;
    line-height: 43px;
    color: #3a3d45;
}
.rule-points li {
    position: relative;
    margin-bottom: 42px;
}
.rule-points li::before {
    content: "";
    position: absolute;
    left: -25px;
    top: 17px;
    width: 10px;
    height: 10px;
    border-radius: 50%;
    background-color: #33363c;
}

/* status bar */
.statusbar {
    height: 19px;
    flex: none;
    display: flex;
    align-items: center;
    background-color: #5e5e5e;
    color: #e0e0e0;
    font-size: 9.500px;
    border-top: 1px solid #777;
}
.st-slide {
    margin-left: 7px;
    width: 75px;
}
.st-lang {
    margin-left: 13px;
    width: 860px;
}
.st-notes {
    display: flex;
    align-items: center;
    gap: 5px;
    width: 58px;
    flex: none;
}
.st-view {
    width: 32px;
    height: 18px;
    display: flex;
    align-items: center;
    justify-content: center;
    flex: none;
}
.st-view-on {
    background-color: #484848;
}
.zoom-ctl {
    display: flex;
    align-items: center;
    margin-left: 8px;
    width: 107px;
}
.zoom-minus {
    width: 5px;
    height: 2px;
    background-color: #ddd;
}
.zoom-track {
    position: relative;
    width: 86px;
    height: 1px;
    margin: 0 6px 0 4px;
    background-color: #bbb;
}
.zoom-knob {
    position: absolute;
    left: 34px;
    top: -4px;
    width: 4px;
    height: 9px;
    background-color: #eee;
}
.zoom-tick {
    position: absolute;
    left: 43px;
    top: -2px;
    width: 1px;
    height: 5px;
    background-color: #ccc;
}
.zoom-plus {
    width: 6px;
    height: 6px;
    background:
        linear-gradient(#ddd, #ddd) center / 6px 2px no-repeat,
        linear-gradient(#ddd, #ddd) center / 2px 6px no-repeat;
}
.st-pct {
    margin-left: 4px;
    width: 29px;
    color: #c4c4c4;
}

/* overlays */
.call-pill {
    position: absolute;
    left: 540px;
    top: 0;
    width: 520px;
    height: 8px;
    display: flex;
    border-radius: 0 0 6px 6px;
    overflow: hidden;
}
.pill-green {
    width: 384px;
    background-color: #1fd35c;
}
.pill-red {
    flex: 1;
    background-color: #e32b2b;
}
.rec-badge {
    position: absolute;
    left: 10px;
    top: 7px;
    width: 64px;
    height: 65px;
    border-radius: 50%;
    background-color: rgba(24, 24, 24, 0.95);
}
.rec-badge svg {
    position: absolute;
    left: 14px;
    top: 15px;
}
.rec-arrow {
    position: absolute;
    left: 57px;
    top: 28px;
    border-top: 4px solid transparent;
    border-bottom: 4px solid transparent;
    border-left: 4px solid #fff;
}
.edge-strip {
    position: absolute;
    right: 0;
    top: 170px;
    bottom: 0;
    width: 3px;
    background-color: #dcdcdc;
}
```
